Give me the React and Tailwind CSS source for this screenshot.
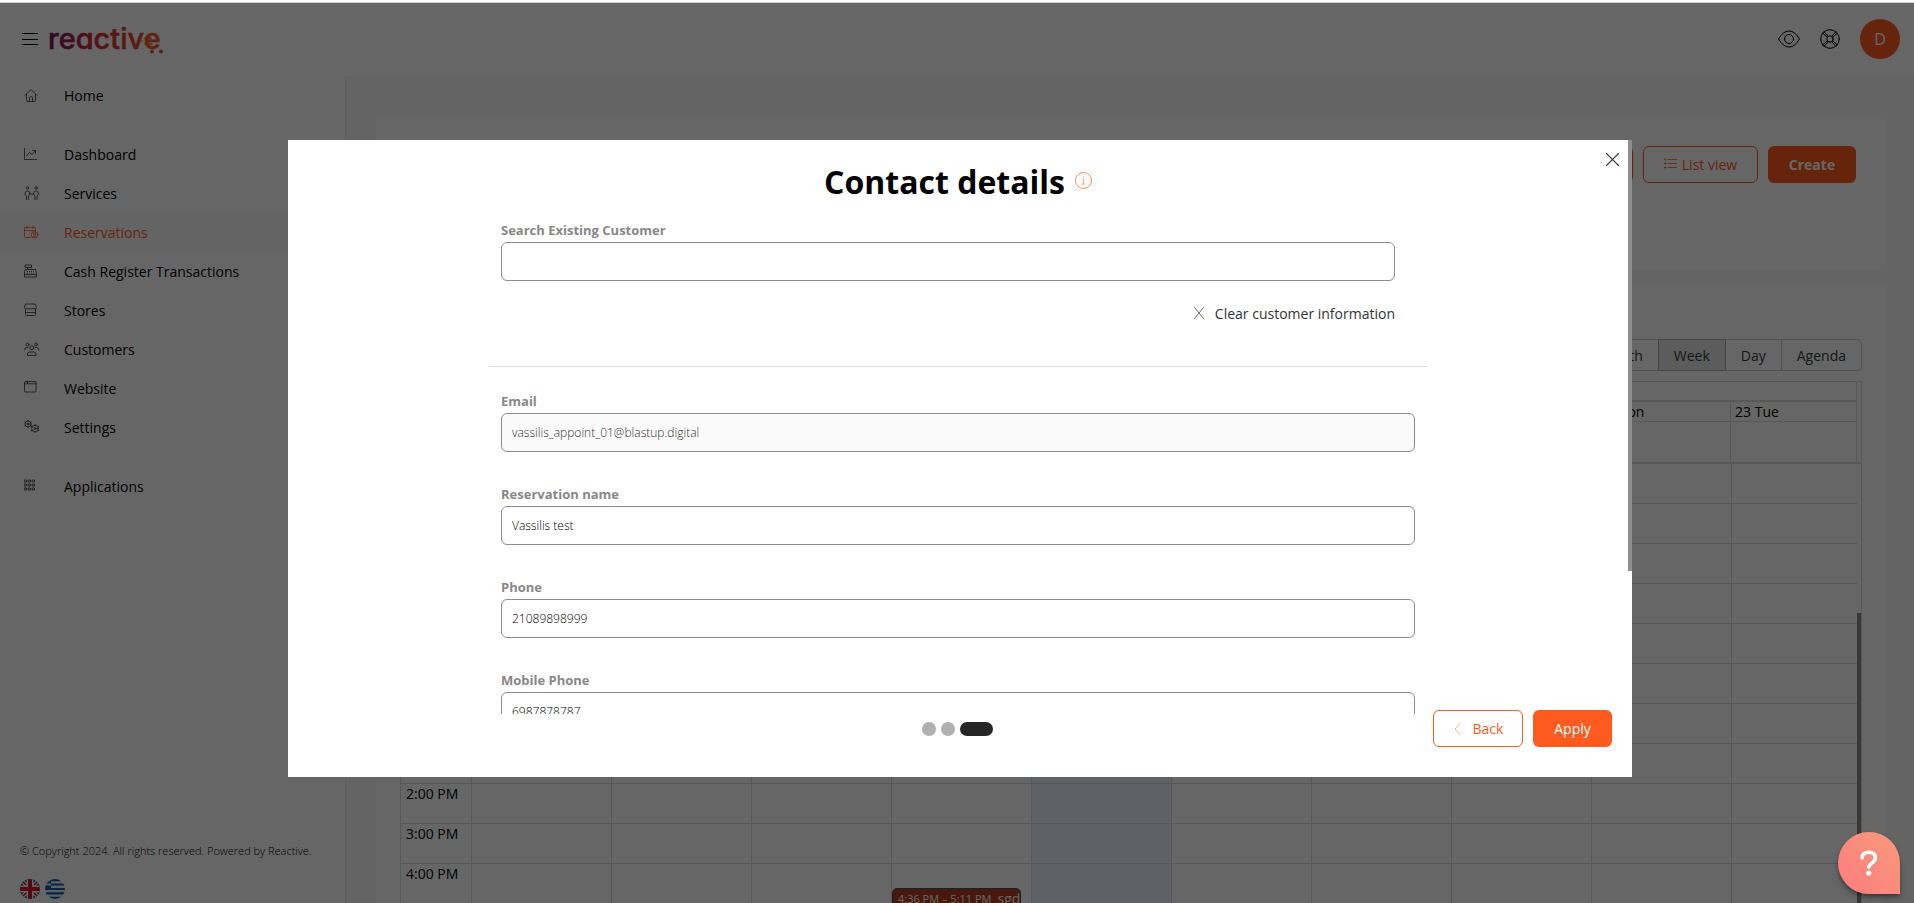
import clsx from 'clsx'

/* ── Icons ─────────────────────────────────── */

function Icon({ size = 16, viewBox = '0 0 16 16', stroke = 0.8, className, children }) {
  return (
    <svg
      width={size}
      height={size}
      viewBox={viewBox}
      fill="none"
      stroke="currentColor"
      strokeWidth={stroke}
      strokeLinecap="round"
      strokeLinejoin="round"
      className={clsx('shrink-0', className)}
      aria-hidden="true"
    >
      {children}
    </svg>
  )
}

const ICONS = {
  home: <path d="M.8 7.500 7 1.500l6.200 6M2.500 6.500v6q0 1 1 1h7q1 0 1-1v-6M5.500 13.500v-4q0-.8.8-.8h1.400q.8 0 .8.800v4" />,
  chart: <path d="M.5 1.500v11h12M2.500 9l3-3.500 2.500 2 3.500-4M8.500 3.500h3v3" />,
  services: (
    <>
      <circle cx="3.500" cy="2" r="1.200" />
      <circle cx="12" cy="2" r="1.200" />
      <path d="M2.500 13.500V10L.8 8.500q0-3.500 2.700-3.500T6 8L4.500 10v3.500M11 13.500V10L9.500 8q0-3 2.500-3t2.700 3.500L13 10v3.500M6 8h3.500" />
    </>
  ),
  reservations: (
    <>
      <path d="M6.500 12.500H1.500q-1 0-1-1V2.500h11v3.500M.5 5.500h11M3 1v2.500M9 1v2.500" />
      <circle cx="10.500" cy="9.800" r="3.200" />
      <circle cx="10.500" cy="9" r="1" />
      <path d="M8.500 12q2-2 4 0" />
    </>
  ),
  register: (
    <>
      <path d="M1.500 5.500h10l1 4v3.500H.5v-3.500zM.5 10.500h12M3.500 5.500v-2M1.500 1h6v2.500h-6z" />
      <path d="M3.500 7.500h.1M5.500 7.500h.1M7.500 7.500h.1M9.500 7.500h.1M3.500 9h.1M5.500 9h.1M7.500 9h.1M9.500 9h.1" />
    </>
  ),
  store: <path d="M1.500 6.500v5q0 1 1 1h8q1 0 1-1v-5M1.500 9.500h10M2 1h9l1.500 3.500q0 1.500-1.500 1.500T9.500 5Q9 6 8 6T6.500 5Q6 6 5 6T3.500 5Q3 6 2 6T.5 4.500z" />,
  customers: (
    <>
      <circle cx="3.500" cy="2.500" r="1.500" />
      <circle cx="12" cy="2.500" r="1.500" />
      <circle cx="7.800" cy="5.800" r="2" />
      <path d="M.5 8q0-2.500 2.500-2.500h1M15 8q0-2.500-2.500-2.500h-1M3.500 13v-1q0-2 2-2H10q2 0 2 2v1z" />
    </>
  ),
  website: (
    <>
      <rect x=".5" y=".5" width="11.500" height="10.500" rx="1" />
      <path d="M.5 2.800h11.500M3.500 .5v2" />
    </>
  ),
  settings: (
    <>
      <circle cx="4" cy="4" r="3" />
      <circle cx="4" cy="4" r="1" />
      <circle cx="11" cy="8.500" r="3.200" />
      <circle cx="11" cy="8.500" r="1" />
      <path strokeWidth="1.200" strokeLinecap="butt" d="M4 0v1M4 7v1M.5 2l.9.5M6.600 5.500l.9.500M.5 6l.9-.5M6.600 2.500l.9-.5M11 4.200v1M11 11.700v1M7 6.500l1 .5M14 10l1 .5M7 10.500l1-.5M14 7l1-.5" />
    </>
  ),
  apps: (
    <>
      {[1.5, 5.5, 9.5].map((y) =>
        [1.5, 5.5, 9.5].map((x) => (
          <rect key={`${x}-${y}`} x={x - 1} y={y - 0.5} width="2" height="2" />
        ))
      )}
    </>
  ),
}

function Logo() {
  return (
    <svg width="122" height="38" viewBox="0 0 122 38" role="img" aria-label="reactive">
      <defs>
        <linearGradient id="brand" gradientUnits="userSpaceOnUse" x1="0" y1="0" x2="116" y2="0">
          <stop offset="0" stopColor="#6b1a5c" />
          <stop offset=".35" stopColor="#d0263f" />
          <stop offset=".7" stopColor="#e0402c" />
          <stop offset="1" stopColor="#e8602a" />
        </linearGradient>
      </defs>
      <text
        x="0"
        y="29"
        fill="url(#brand)"
        stroke="url(#brand)"
        strokeWidth=".5"
        strokeLinejoin="round"
        className="font-['Inter',sans-serif] text-[29px] font-medium [font-feature-settings:'cv11']"
      >
        reactive
      </text>
      {/* Speed lines and cart wheels around the last letter */}
      <path d="M97 18h6M99 21h5M97 24h7" stroke="#e8602a" strokeWidth="1.600" strokeLinecap="round" />
      <path d="M94 21h.1" stroke="#e8602a" strokeWidth="1.600" strokeLinecap="round" />
      <circle cx="104" cy="31.500" r="1.900" fill="#e0502a" />
      <circle cx="113" cy="31.500" r="1.900" fill="#e0502a" />
    </svg>
  )
}

function FlagUK() {
  return (
    <svg width="20" height="20" viewBox="0 0 20 20" aria-hidden="true">
      <clipPath id="uk"><circle cx="10" cy="10" r="10" /></clipPath>
      <g clipPath="url(#uk)">
        <path fill="#012169" d="M0 0h20v20H0z" />
        <path stroke="#fff" strokeWidth="4" d="m0 0 20 20M20 0 0 20" />
        <path stroke="#c8102e" strokeWidth="1.500" d="m0 0 20 20M20 0 0 20" />
        <path stroke="#fff" strokeWidth="7" d="M10 0v20M0 10h20" />
        <path stroke="#d80f2f" strokeWidth="4" d="M10 0v20M0 10h20" />
      </g>
    </svg>
  )
}

function FlagGR() {
  return (
    <svg width="20" height="20" viewBox="0 0 20 20" aria-hidden="true">
      <clipPath id="gr"><circle cx="10" cy="10" r="10" /></clipPath>
      <g clipPath="url(#gr)">
        <path fill="#f0f0f0" d="M0 0h20v20H0z" />
        <path fill="#0d5eaf" d="M0 0h20v2.200H0zM0 4.400h20v2.200H0zM0 8.900h20v2.200H0zM0 13.300h20v2.200H0zM0 17.800h20V20H0zM0 0h6v11H0z" />
        <path fill="#f0f0f0" d="M0 4.400h6v2.200H0z" />
      </g>
    </svg>
  )
}

/* ── Data ──────────────────────────────────── */

const NAV_GROUPS = [
  [{ label: 'Home', icon: 'home' }],
  [
    { label: 'Dashboard', icon: 'chart' },
    { label: 'Services', icon: 'services' },
    { label: 'Reservations', icon: 'reservations', active: true },
    { label: 'Cash Register Transactions', icon: 'register' },
    { label: 'Stores', icon: 'store' },
    { label: 'Customers', icon: 'customers' },
    { label: 'Website', icon: 'website' },
    { label: 'Settings', icon: 'settings' },
  ],
  [{ label: 'Applications', icon: 'apps' }],
]

const DAYS = ['', '', '', '', '', '', '', '', '22 Mon', '23 Tue']
const TODAY = 4
const HOURS = ['', '', '', '', '', '', '', '', '2:00 PM', '3:00 PM', '4:00 PM', '']
const VIEWS = ['Month', 'Week', 'Day', 'Agenda']

const FIELDS = [
  { id: 'email', label: 'Email', type: 'email', value: 'vassilis_appoint_01@blastup.digital', disabled: true },
  { id: 'name', label: 'Reservation name', type: 'text', value: 'Vassilis test' },
  { id: 'phone', label: 'Phone', type: 'tel', value: '21089898999' },
  { id: 'mobile', label: 'Mobile Phone', type: 'tel', value: '6987878787' },
]

/* ── Page shell ────────────────────────────── */

function Header() {
  return (
    <header className="flex h-[73px] shrink-0 items-center bg-white pr-[14px] pb-px pl-[22px]">
      <button type="button" aria-label="Menu">
        <Icon stroke={1}>
          <path d="M0 2.500h16M0 8.500h16M0 13.500h16" strokeLinecap="butt" />
        </Icon>
      </button>
      <a href="#" className="ml-[10px]">
        <Logo />
      </a>
      <div className="ml-auto flex items-center gap-5">
        <button type="button" aria-label="Preview">
          <Icon size={22} viewBox="0 0 22 22" stroke={1}>
            <path d="M.6 11Q5 3 11 3t10.400 8Q17 19 11 19T.6 11z" />
            <circle cx="11" cy="11" r="4.500" />
          </Icon>
        </button>
        <button type="button" aria-label="Support">
          <Icon size={20} viewBox="0 0 20 20" stroke={1}>
            <circle cx="10" cy="10" r="9.300" />
            <circle cx="10" cy="10" r="3.200" />
            <path d="m2.500 4 5 4.300M4 2.500l4.300 5M17.500 4l-5 4.300M16 2.500l-4.300 5M2.500 16l5-4.300M4 17.500l4.300-5M17.500 16l-5-4.300M16 17.500l-4.300-5" />
          </Icon>
        </button>
        <button type="button" className="size-10 rounded-full bg-[#ff5a1f] text-base font-medium text-white">
          D
        </button>
      </div>
    </header>
  )
}

function Sidebar() {
  return (
    <aside className="flex w-[346px] shrink-0 flex-col border-r border-[#ececec] bg-white">
      <nav className="flex flex-col gap-5">
        {NAV_GROUPS.map((group, i) => (
          <ul key={i}>
            {group.map(({ label, icon, active }) => (
              <li key={label}>
                <a
                  href="#"
                  className={clsx(
                    'flex h-[39px] items-center gap-6 pl-6 text-sm',
                    active ? 'bg-[#fafafa] font-medium text-[#ff5a1f]' : 'text-black'
                  )}
                >
                  <Icon className={active ? 'text-[#ff5a1f]' : 'text-[#333]'}>{ICONS[icon]}</Icon>
                  {label}
                </a>
              </li>
            ))}
          </ul>
        ))}
      </nav>
      <div className="mt-auto px-5 pb-1">
        <p className="text-[11px] leading-4 font-light whitespace-nowrap text-black">
          © Copyright 2024. All rights reserved. Powered by Reactive.
        </p>
        <div className="mt-5 flex gap-[5px]">
          <button type="button" aria-label="English"><FlagUK /></button>
          <button type="button" aria-label="Greek"><FlagGR /></button>
        </div>
      </div>
    </aside>
  )
}

function Calendar() {
  return (
    <section className="mt-[10px] grid grid-cols-[1fr_4px] border border-[#ddd] text-sm">
      {/* Header rows */}
      <div className="border-r border-b-2 border-[#ddd]">
        <div className="h-[18px]" />
        <div className="grid grid-cols-[70px_1fr] border-t-2 border-[#ddd]">
          <div />
          <div className="grid grid-cols-[repeat(9,140fr)_126fr]">
            {DAYS.map((day, i) => (
              <div key={i} className="border-l border-[#ddd]">
                <div className="h-5 border-b border-[#ddd] px-1 leading-5">{day}</div>
                <div className="h-10" />
              </div>
            ))}
          </div>
        </div>
      </div>
      <div className="border-b-2 border-[#ddd]" />

      {/* Time grid */}
      <div className="grid grid-cols-[70px_1fr]">
        <div>
          {HOURS.map((hour, i) => (
            <div key={i} className="h-10 border-b border-[#ddd] px-[5px] leading-5">{hour}</div>
          ))}
        </div>
        <div className="grid grid-cols-[repeat(9,140fr)_126fr]">
          {DAYS.map((_, i) => (
            <div key={i} className={clsx('border-l border-[#ddd]', i === TODAY && 'bg-[#eaf6ff]')}>
              {HOURS.map((_, h) => (
                <div key={h} className="relative h-10 border-b border-[#ddd]">
                  <div className="h-[21px] border-b border-[#f7f7f7]/60" />
                  {i === 3 && h === 10 && (
                    <button
                      type="button"
                      className="absolute top-6 right-[10px] left-0 flex h-6 gap-[6px] overflow-hidden rounded-[5px] border border-[#265985] bg-[#b43c1e] pl-[5px] whitespace-nowrap text-white"
                    >
                      <span className="text-[11px] leading-5">4:36 PM – 5:11 PM</span>
                      <span className="text-sm leading-5">sgd</span>
                    </button>
                  )}
                </div>
              ))}
            </div>
          ))}
        </div>
      </div>
      <div className="mt-[149px] bg-[#8c8c8c]" />
    </section>
  )
}

function Reservations() {
  return (
    <main className="min-w-0 flex-1 bg-[#fafafa] pt-10 pr-7 pl-[30px]">
      <section className="flex h-[154px] items-start justify-end gap-[10px] rounded bg-white p-[30px]">
        <button type="button" aria-label="Calendar view" className="h-[37px] w-[115px] rounded-md border border-[#ff5a1f]" />
        <button
          type="button"
          className="flex h-[37px] w-[115px] items-center justify-center gap-[5px] rounded-md border border-[#ff5a1f] text-sm text-[#ff5a1f]"
        >
          <Icon size={13} viewBox="0 0 13 13">
            <path d="M4 1.500h9M4 5.500h9M4 9.500h9M1 1h1v1H1zM1 5h1v1H1zM1 9h1v1H1z" />
          </Icon>
          List view
        </button>
        <button type="button" className="h-[37px] w-[88px] rounded-md bg-[#ff5a1f] text-sm font-bold text-white">
          Create
        </button>
      </section>

      <section className="mt-[15px] rounded bg-white px-6 pt-[54px]">
        <div className="flex justify-end">
          {VIEWS.map((view) => (
            <button
              key={view}
              type="button"
              className={clsx(
                '-ml-px h-8 border px-[15px] pt-px text-sm text-[#373a3c] first:rounded-l last:rounded-r',
                view === 'Week' ? 'z-10 border-[#adadad] bg-[#e6e6e6]' : 'border-[#ccc]'
              )}
            >
              {view}
            </button>
          ))}
        </div>
        <Calendar />
      </section>
    </main>
  )
}

/* ── Modal ─────────────────────────────────── */

function Field({ id, label, className, ...props }) {
  return (
    <div className={className}>
      <label htmlFor={id} className="mb-0.5 block text-[13px] leading-5 font-bold text-[#888]">
        {label}
      </label>
      <input
        id={id}
        className="h-[39px] w-full rounded-md border border-[#8c8c8c] bg-white px-[10px] text-xs font-light text-black disabled:bg-[#fafafa] disabled:text-[#333]"
        {...props}
      />
    </div>
  )
}

function ContactModal() {
  return (
    <div
      role="dialog"
      aria-modal="true"
      aria-labelledby="modal-title"
      className="relative flex h-full flex-col bg-white"
    >
      <button type="button" aria-label="Close" className="absolute top-[13px] right-[13px] text-[#444]">
        <Icon size={13} viewBox="0 0 13 13" stroke={1.2}>
          <path d="m.5.500 12 12M12.500.500l-12 12" />
        </Icon>
      </button>

      <div className="min-h-0 flex-1 overflow-hidden pt-[22px] pr-1">
        <div className="mb-[18px] flex items-center justify-center gap-[10px]">
          <h1 id="modal-title" className="text-[32px] leading-10 font-bold text-black">Contact details</h1>
          <Icon size={17} viewBox="0 0 17 17" stroke={0.7} className="mb-1 text-[#ff5a1f]">
            <circle cx="8.500" cy="8.500" r="8" />
            <path d="M7.500 7h1v5M7 12h3M8.500 4.500v.3" strokeWidth=".5" />
          </Icon>
        </div>

        <form className="mx-auto w-[70%]">
          <div className="pr-8 pl-3">
            <Field id="search" label="Search Existing Customer" type="search" />
            <button type="button" className="mt-[23px] ml-auto flex items-center gap-[10px] text-sm leading-5 text-[#333]">
              <Icon size={12} viewBox="0 0 12 12" stroke={0.7} className="mb-0.5">
                <path d="m1.500.500 9 11M10.500.500l-9 11" />
              </Icon>
              Clear customer information
            </button>
          </div>

          <hr className="mt-[42px] mb-6 border-[#ddd]" />

          <div className="flex flex-col gap-8 px-3">
            {FIELDS.map(({ value, ...field }) => (
              <Field key={field.id} defaultValue={value} {...field} />
            ))}
          </div>
        </form>
      </div>

      {/* Scrollbar thumb */}
      <div className="absolute top-0 right-0 h-[431px] w-1 bg-[#8f8f8f]" />

      <footer className="-mt-1 grid shrink-0 grid-cols-[1fr_auto_1fr] items-center pr-5 pb-[30px] pl-[14px]">
        <div />
        <div className="flex gap-[5px]" aria-label="Step 3 of 3">
          <span className="size-[14px] rounded-full bg-[#b0b0b0]" />
          <span className="size-[14px] rounded-full bg-[#b0b0b0]" />
          <span className="h-[14px] w-[33px] rounded-full bg-[#262626]" />
        </div>
        <div className="flex justify-end gap-[10px]">
          <button
            type="button"
            className="flex h-[37px] w-[90px] items-center justify-center gap-2 rounded-md border border-[#ff5a1f] text-sm text-[#ff5a1f]"
          >
            <Icon size={12} viewBox="0 0 12 12" stroke={0.5}>
              <path d="m7 .5-5 5.500 5 5.500" />
            </Icon>
            Back
          </button>
          <button type="button" className="h-[37px] w-[79px] rounded-md bg-[#ff5a1f] text-sm font-medium text-white">
            Apply
          </button>
        </div>
      </footer>
    </div>
  )
}

export default function App() {
  return (
    <div className="flex h-screen flex-col overflow-hidden bg-white font-['Open_Sans',sans-serif] text-black">
      <div className="h-[3px] shrink-0 border-b border-[#d0d0d0]" />

      <div className="relative flex min-h-0 flex-1 flex-col">
        <Header />
        <div className="flex min-h-0 flex-1">
          <Sidebar />
          <Reservations />
        </div>

        {/* Backdrop */}
        <div className="absolute inset-0 z-20 bg-black/60 pt-[137px] pr-[282px] pb-[126px] pl-72">
          <ContactModal />
        </div>
      </div>

      {/* Help bubble */}
      <button
        type="button"
        aria-label="Help"
        className="fixed right-[14px] bottom-[9px] z-30 flex size-[62px] items-center justify-center rounded-full rounded-br-md bg-linear-to-tr from-[#fc7b80] to-[#f79a7a] text-white shadow-md shadow-black/40"
      >
        <svg width="18" height="26" viewBox="0 0 18 26" fill="none" aria-hidden="true">
          <path d="M2.200 8Q2.200 2.200 8.800 2.200t6.600 5.600q0 2.700-3.200 5.200-3.400 2.400-3.400 4.200" stroke="currentColor" strokeWidth="3.600" strokeLinecap="round" />
          <circle cx="8.800" cy="23" r="2.600" fill="currentColor" />
        </svg>
      </button>
    </div>
  )
}
